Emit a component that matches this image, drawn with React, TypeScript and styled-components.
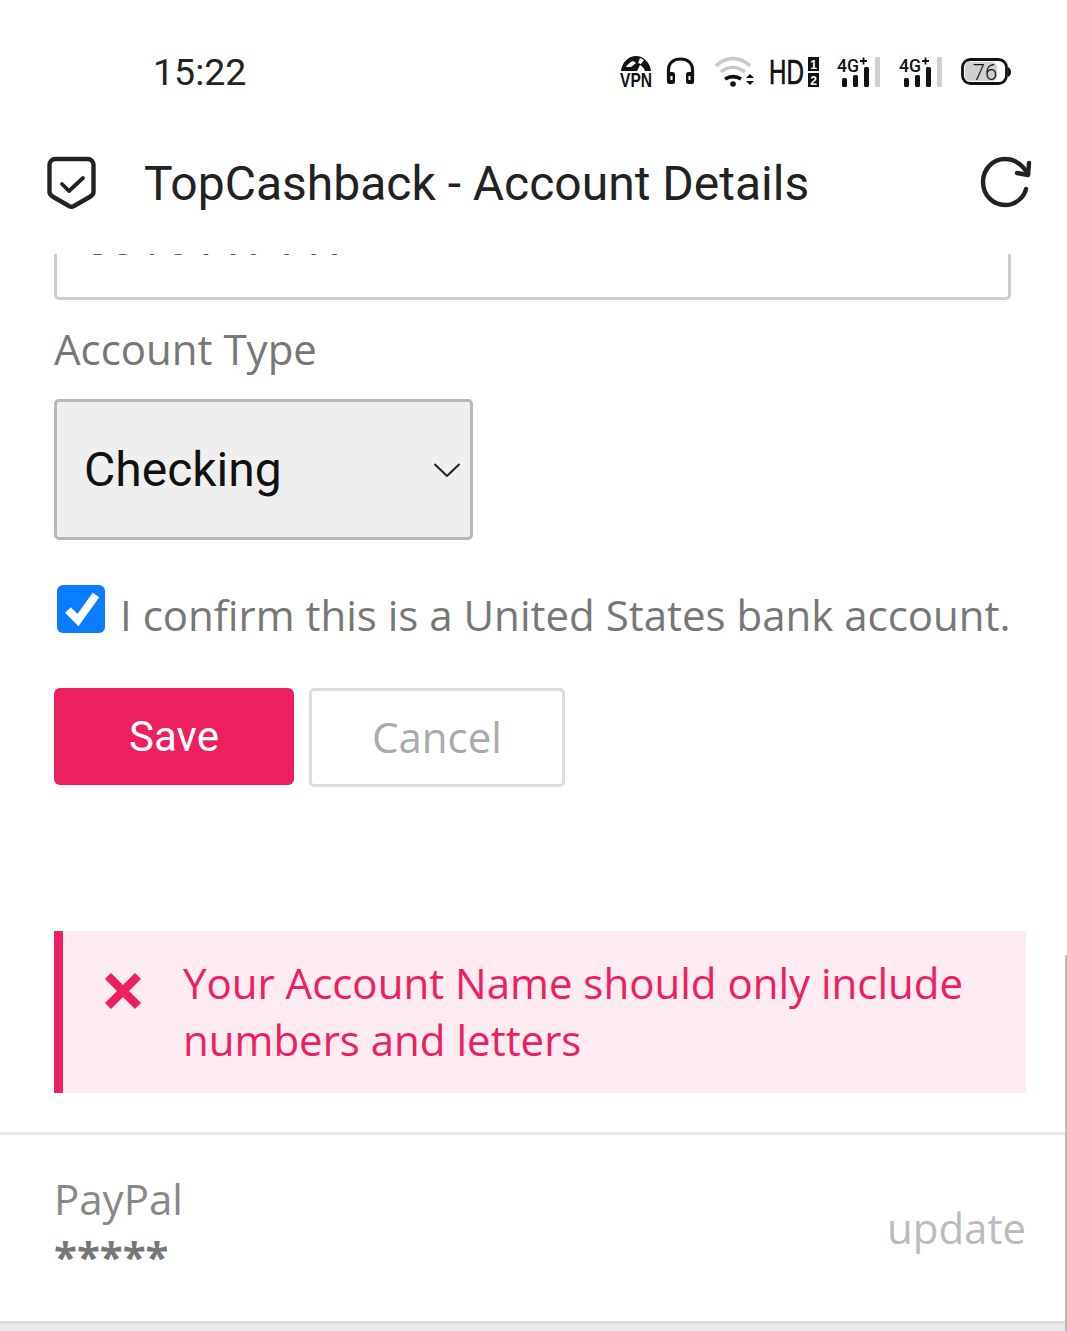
import React from "react";
import styled, { createGlobalStyle } from "styled-components";

const GlobalStyle = createGlobalStyle`
  html, body {
    margin: 0;
    padding: 0;
    background: #fff;
  }
`;

function StatusIcons() {
  return (
    <Icons>
      <StatusGlyph $left={0} width="32" height="32" viewBox="0 0 32 32">
        <path d="M1 15C2 6 9 0 16 0s14 6 15 15h-6c-1-3-3-5-5-6l-3 6H1z" fill="#111" />
        <path d="M6 11c1-2 4-5 7-6l3 2-5 4H6zM20 2l-2 5 3 1 3-4z" fill="#fff" />
        <text x="16" y="31" textAnchor="middle" fontFamily="'Liberation Sans'" fontSize="20" fontWeight="700" textLength="32" lengthAdjust="spacingAndGlyphs" fill="#111">VPN</text>
      </StatusGlyph>
      <StatusGlyph $left={14} width="29" height="30" viewBox="0 0 29 30" fill="none">
        <path d="M2.500 24V13C2.500 6 7.500 2 14.500 2s12 4 12 11v11" stroke="#111" strokeWidth="3.200" />
        <rect x="1" y="15" width="8" height="12" rx="2.500" fill="#111" />
        <rect x="20" y="15" width="8" height="12" rx="2.500" fill="#111" />
        <rect x="4.500" y="19" width="2" height="4" fill="#fff" />
        <rect x="22.500" y="19" width="2" height="4" fill="#fff" />
      </StatusGlyph>
      <StatusGlyph $left={20} width="40" height="30" viewBox="0 0 40 30" fill="none">
        <path d="M1 9c10-10 24-10 34 0" stroke="#c9c9c9" strokeWidth="3.600" />
        <path d="M6 15c7-6 16-6 24 0" stroke="#c9c9c9" strokeWidth="3.600" />
        <path d="M10 22c5-3 11-3 16 0" stroke="#111" strokeWidth="3.600" />
        <circle cx="18" cy="27" r="2.800" fill="#111" />
        <path d="M31 21l4-4 4 4zM31 24l4 4 4-4z" fill="#111" />
      </StatusGlyph>
      <StatusGlyph $left={14} width="50" height="30" viewBox="0 0 50 30">
        <text transform="translate(0 27) scale(0.67 1)" fontFamily="'Liberation Sans'" fontSize="36" stroke="#111" strokeWidth="0.700" fill="#111">HD</text>
        <rect x="39" y="0" width="11" height="14" fill="#111" />
        <rect x="39" y="16" width="11" height="14" fill="#111" />
        <text x="44.500" y="12" textAnchor="middle" fontFamily="'Liberation Sans'" fontSize="12" fontWeight="700" fill="#fff">1</text>
        <text x="44.500" y="28" textAnchor="middle" fontFamily="'Liberation Sans'" fontSize="12" fontWeight="700" fill="#fff">2</text>
      </StatusGlyph>
      <SignalIcon />
      <SignalIcon />
      <StatusGlyph $left={18} width="50" height="28" viewBox="0 0 50 28" fill="none">
        <rect x="1.500" y="1.500" width="44" height="24" rx="8" stroke="#111" strokeWidth="2.800" />
        <rect x="4" y="4" width="32" height="19" rx="5" fill="#d0d0d0" />
        <path d="M47 9c2 1 3 3 3 5s-1 4-3 5z" fill="#111" />
        <text x="24" y="22" textAnchor="middle" fontFamily="Roboto" fontSize="22" fontWeight="300" fill="#111">76</text>
      </StatusGlyph>
    </Icons>
  );
}

function SignalIcon() {
  return (
    <StatusGlyph $left={18} width="44" height="30" viewBox="0 0 44 30">
      <text x="0" y="15" fontFamily="Roboto" fontSize="18" fontWeight="500" textLength="22" lengthAdjust="spacingAndGlyphs" fill="#111">4G</text>
      <path d="M23 4h7M26.500 0.500v7" stroke="#111" strokeWidth="1.800" />
      <rect x="5" y="21" width="5" height="9" rx="1.500" fill="#111" />
      <rect x="16" y="18" width="5" height="12" rx="1.500" fill="#111" />
      <rect x="27" y="10" width="5" height="20" rx="1.500" fill="#111" />
      <rect x="38" y="0" width="5" height="30" rx="1" fill="#cfcfcf" />
    </StatusGlyph>
  );
}

export default function App() {
  return (
    <Phone>
      <GlobalStyle />
      <StatusBar>
        <Clock>15:22</Clock>
        <StatusIcons />
      </StatusBar>
      <Header>
        <svg width="52" height="56" viewBox="0 0 52 56" fill="none">
          <path
            d="M9.500 3h32c3.500 0 6 2.500 6 6v27c0 2-1 3-3 4.500L28 50c-1.500 1-3.500 1-5 0L6.500 40.500c-2-1.500-3-2.500-3-4.500V9c0-3.500 2.500-6 6-6z"
            stroke="#222"
            strokeWidth="4.400"
            strokeLinejoin="round"
          />
          <path d="M16 28l7 7 14-13" stroke="#222" strokeWidth="3.800" strokeLinecap="round" strokeLinejoin="round" />
        </svg>
        <Title>TopCashback - Account Details</Title>
        <RefreshIcon width="54" height="54" viewBox="0 0 54 54" fill="none">
          <path
            d="M47 34c-2 9-11 16-21 16C14 50 4 40 4 27S14 4 26 4c10 0 17 5 23 15"
            stroke="#222"
            strokeWidth="4.400"
            strokeLinecap="round"
          />
          <path d="M50 8l-1 12-11-2" stroke="#222" strokeWidth="4.400" strokeLinecap="round" strokeLinejoin="round" />
        </RefreshIcon>
      </Header>
      <Content>
        <Form>
          <AccountInput>
            <AccountValue>5316117117</AccountValue>
          </AccountInput>
          <FieldLabel>Account Type</FieldLabel>
          <SelectBox>
            Checking
            <svg width="26" height="14" viewBox="0 0 26 14" fill="none">
              <path d="M0.500 1L13 13 25.500 1" stroke="#222" strokeWidth="2" />
            </svg>
          </SelectBox>
          <ConfirmRow>
            <CheckBox>
              <svg width="48" height="48" viewBox="0 0 48 48" fill="none">
                <path d="M11 25l10 10L39 10" stroke="#fff" strokeWidth="8" />
              </svg>
            </CheckBox>
            <ConfirmText>I confirm this is a United States bank account.</ConfirmText>
          </ConfirmRow>
          <Buttons>
            <SaveButton>Save</SaveButton>
            <CancelButton>Cancel</CancelButton>
          </Buttons>
        </Form>
        <ErrorBox>
          <ErrorIcon>
            <svg width="40" height="40" viewBox="0 0 40 40" fill="none">
              <path d="M5 5l30 30M35 5L5 35" stroke="#ec205e" strokeWidth="8.500" strokeLinejoin="round" />
            </svg>
          </ErrorIcon>
          <ErrorText>
            Your Account Name should only include
            <br />
            numbers and letters
          </ErrorText>
        </ErrorBox>
        <PaymentRow>
          <PaymentInfo>
            <PaymentName>PayPal</PaymentName>
            <PaymentMask>*****</PaymentMask>
          </PaymentInfo>
          <UpdateLink>update</UpdateLink>
        </PaymentRow>
        <PageEnd />
        <ScrollEdge />
      </Content>
    </Phone>
  );
}

const Phone = styled.div`
  width: 1067px;
  height: 1331px;
  overflow: hidden;
  background: #fff;
  display: flex;
  flex-direction: column;
`;

const StatusBar = styled.div`
  height: 125px;
  flex-shrink: 0;
  padding: 19px 56px 0 153px;
  box-sizing: border-box;
  display: flex;
  align-items: center;
  justify-content: space-between;
`;

const Clock = styled.div`
  font-family: Roboto, sans-serif;
  font-size: 37.5px;
  color: #222;
`;

const Icons = styled.div`
  display: flex;
  align-items: center;
`;

const StatusGlyph = styled.svg<{ $left: number }>`
  margin-left: ${(p) => p.$left}px;
  overflow: visible;
  flex-shrink: 0;
`;

const Header = styled.div`
  height: 129px;
  flex-shrink: 0;
  padding: 0 34px 12px 46px;
  box-sizing: border-box;
  display: flex;
  align-items: center;
  background: #fff;
`;

const Title = styled.div`
  flex: 1;
  margin-left: 46px;
  font-family: Roboto, sans-serif;
  font-size: 48px;
  color: #222;
`;

const RefreshIcon = styled.svg`
  margin-bottom: 4px;
`;

const Content = styled.div`
  flex: 1;
  position: relative;
  overflow: hidden;
`;

const Form = styled.div`
  padding: 0 56px 0 54px;
  display: flex;
  flex-direction: column;
  align-items: flex-start;
`;

const AccountInput = styled.div`
  width: 100%;
  height: 46px;
  box-sizing: border-box;
  border: 3px solid #cdcdcd;
  border-top: 0;
  border-radius: 0 0 5px 5px;
  overflow: hidden;
`;

const AccountValue = styled.div`
  margin: -38px 0 0 26px;
  font-family: Roboto, sans-serif;
  font-size: 48px;
  line-height: 46px;
  color: #555;
`;

const FieldLabel = styled.div`
  margin-top: 20px;
  font-family: "Open Sans", sans-serif;
  font-size: 42px;
  line-height: 57px;
  color: #777;
`;

const SelectBox = styled.div`
  margin-top: 22px;
  width: 419px;
  height: 141px;
  box-sizing: border-box;
  padding: 0 10px 0 27px;
  border: 3px solid #b8b8b8;
  border-radius: 5px;
  background: #efefef;
  display: flex;
  align-items: center;
  justify-content: space-between;
  font-family: Roboto, sans-serif;
  font-size: 48px;
  color: #111;
`;

const ConfirmRow = styled.div`
  margin-top: 45px;
  margin-left: 3px;
  display: flex;
  align-items: flex-start;
  gap: 15px;
`;

const CheckBox = styled.div`
  width: 48px;
  height: 48px;
  border-radius: 6px;
  background: #0a7cff;
`;

const ConfirmText = styled.div`
  margin-top: 1px;
  font-family: "Open Sans", sans-serif;
  font-size: 42px;
  line-height: 57px;
  color: #777;
  white-space: nowrap;
`;

const Buttons = styled.div`
  margin-top: 45px;
  display: flex;
  align-items: flex-start;
  gap: 15px;
`;

const SaveButton = styled.button`
  width: 240px;
  height: 97px;
  padding: 0 0 1px;
  border: 0;
  border-radius: 6px;
  background: #ec205e;
  color: #fff;
  font-family: Roboto, sans-serif;
  font-size: 42px;
`;

const CancelButton = styled.button`
  width: 256px;
  height: 99px;
  padding: 0 0 2px;
  border: 3px solid #dcdcdc;
  border-radius: 5px;
  background: #fff;
  color: #aaa;
  font-family: "Open Sans", sans-serif;
  font-size: 42px;
`;

const ErrorBox = styled.div`
  margin: 144px 41px 0 54px;
  height: 162px;
  box-sizing: border-box;
  border-left: 9px solid #ec205e;
  background: #ffebf2;
  display: flex;
  align-items: flex-start;
`;

const ErrorIcon = styled.div`
  width: 120px;
  padding: 40px 0 0 40px;
  box-sizing: border-box;
  flex-shrink: 0;
`;

const ErrorText = styled.div`
  padding-top: 23px;
  font-family: "Open Sans", sans-serif;
  font-size: 42px;
  line-height: 57px;
  color: #ec205e;
  white-space: nowrap;
`;

const PaymentRow = styled.div`
  margin-top: 39px;
  height: 192px;
  box-sizing: border-box;
  padding: 0 41px 2px 54px;
  border-top: 3px solid #e8e8e8;
  border-bottom: 3px solid #dcdcdc;
  display: flex;
  align-items: center;
  justify-content: space-between;
`;

const PaymentInfo = styled.div`
  padding-bottom: 6px;
  display: flex;
  flex-direction: column;
`;

const PaymentName = styled.div`
  font-family: "Open Sans", sans-serif;
  font-size: 42px;
  line-height: 57px;
  color: #888;
`;

const PaymentMask = styled.div`
  margin-top: 6px;
  font-family: "Open Sans", sans-serif;
  font-size: 42px;
  font-weight: 700;
  line-height: 46px;
  color: #777;
`;

const UpdateLink = styled.div`
  font-family: "Open Sans", sans-serif;
  font-size: 42px;
  color: #bbb;
`;

const PageEnd = styled.div`
  height: 10px;
  background: #e9eaec;
`;

const ScrollEdge = styled.div`
  position: absolute;
  top: 701px;
  right: 0;
  width: 2px;
  bottom: 0;
  border-radius: 2px 0 0 0;
  background: #b9b9b9;
`;
